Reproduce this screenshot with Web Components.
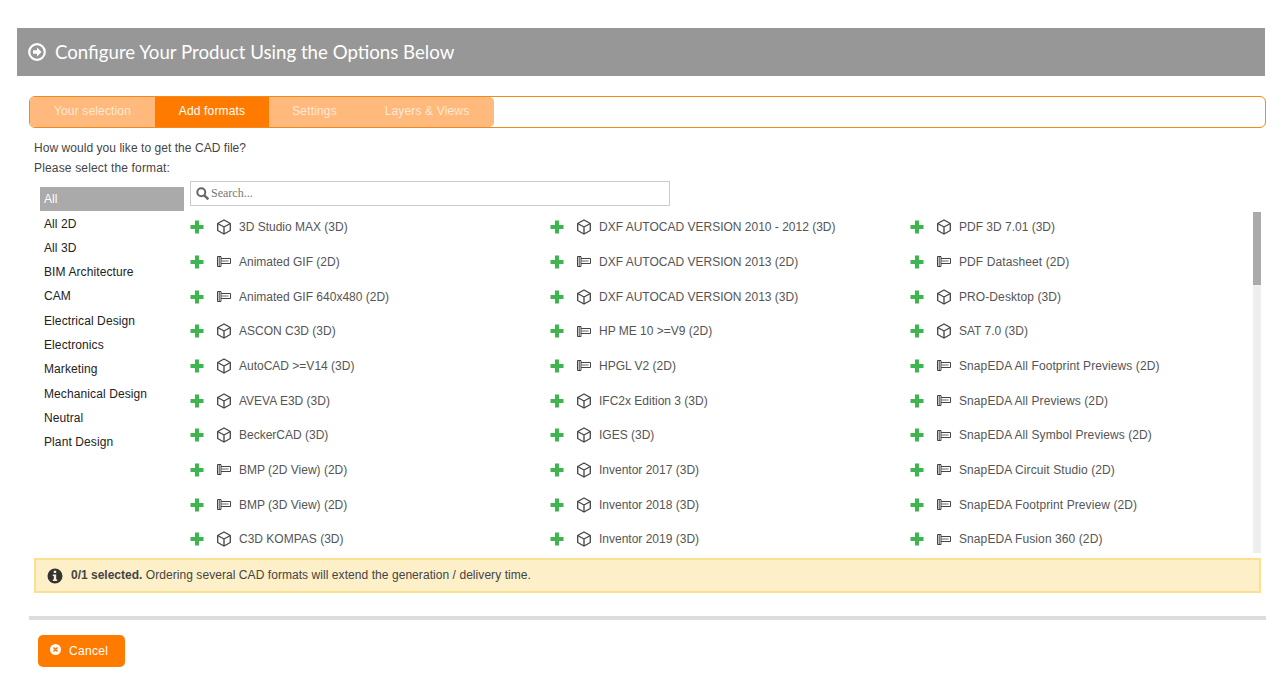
<!DOCTYPE html>
<html>
<head>
<meta charset="utf-8">
<title>Configure</title>
<style>
  html, body { margin: 0; background: #fff; }
  body { font-family: "Liberation Sans", Arial, sans-serif; font-size: 12px; }
</style>
</head>
<body>
<cfg-page></cfg-page>

<script>
const ICONS = {
  plus: `<svg width="14" height="14" viewBox="0 0 14 14"><path fill="#3fb54f" d="M5 .5h4V5h4.500v4H9v4.500H5V9H.5V5H5z"/></svg>`,
  cube: `<svg width="16" height="16" viewBox="0 0 16 16" fill="none" stroke="#444" stroke-width="1.300" stroke-linejoin="round"><path d="M8 1l6.300 3.500v7L8 15l-6.300-3.500v-7z"/><path d="M1.700 4.500L8 8l6.300-3.500M8 8v7"/></svg>`,
  flat: `<svg width="14" height="11" viewBox="0 0 14 11" fill="none" stroke="#444" stroke-width="1"><path d="M.5.500h3.500v10H.500z"/><path d="M2.200 .5v10"/><path d="M4 2.500h9.500v5H4"/><path d="M4 5h7.500" stroke="#666"/></svg>`
}

class CfgHeader extends HTMLElement {
  constructor() {
    super()
    this.attachShadow({mode: 'open'}).innerHTML = `
    <style>
      :host { display: flex; align-items: center; gap: 9px; height: 48px; margin: 28px 20px 0 17px; padding-left: 11px; background: #979797; color: #fff; font: 18.670px Lato, sans-serif; }
      svg { display: block; }
      span { padding-bottom: 1px; }
    </style>
    <svg width="18" height="18" viewBox="0 0 18 18"><circle cx="9" cy="9" r="7.800" fill="none" stroke="#fff" stroke-width="2.200"/><path fill="#fff" d="M9 4.500L13.500 9 9 13.500V10.700H5V7.300H9z"/></svg>
    <span><slot></slot></span>`
  }
}

class CfgTabs extends HTMLElement {
  constructor() {
    super()
    this.attachShadow({mode: 'open'}).innerHTML = `
    <style>
      :host { display: block; height: 30px; margin: 20px 19px 0 29px; border: 1px solid #f08a1d; border-radius: 6px; }
      .row { display: inline-flex; height: 100%; background: #ffb97d; border-radius: 5px; overflow: hidden; }
    </style>
    <div class="row"><slot></slot></div>`
  }
}

class CfgTab extends HTMLElement {
  constructor() {
    super()
    this.attachShadow({mode: 'open'}).innerHTML = `
    <style>
      :host { display: flex; align-items: center; justify-content: center; box-sizing: border-box; padding-bottom: 2px; color: #ffe9d4; font-size: 12px; letter-spacing: .15px; }
      :host([active]) { background: #ff7b00; color: #fff; }
    </style>
    <slot></slot>`
  }
  connectedCallback() {
    this.style.width = this.getAttribute('w') + 'px'
  }
}

class SideItem extends HTMLElement {
  constructor() {
    super()
    this.attachShadow({mode: 'open'}).innerHTML = `
    <style>
      :host { display: flex; align-items: center; height: 24px; margin-bottom: 0.300px; padding-left: 4px; color: #222; font-size: 12px; letter-spacing: .1px; }
      :host([active]) { margin-bottom: .5px; background: #aaa; color: #fff; }
    </style>
    <slot></slot>`
  }
}

class FormatItem extends HTMLElement {
  constructor() {
    super()
    this.attachShadow({mode: 'open'}).innerHTML = `
    <style>
      :host { display: flex; align-items: center; height: 34.670px; color: #555; font-size: 12px; white-space: nowrap; }
      :host([wide]) { letter-spacing: .09px; }
      .plus { display: flex; width: 26px; margin-left: -.5px; margin-right: .5px; }
      .type { display: flex; justify-content: center; width: 16px; margin-right: 7px; }
    </style>
    <span class="plus">${ICONS.plus}</span>
    <span class="type">${this.getAttribute('kind') === '3d' ? ICONS.cube : ICONS.flat}</span>
    <span><slot></slot></span>`
  }
}

class SearchBox extends HTMLElement {
  constructor() {
    super()
    this.attachShadow({mode: 'open'}).innerHTML = `
    <style>
      :host { display: flex; align-items: center; gap: 2px; width: 478px; height: 23px; border: 1px solid #ccc; }
      svg { margin-left: 5px; }
      input { flex: 1; border: 0; outline: 0; padding: 0; font: 12px "Liberation Serif", serif; }
      input::placeholder { color: #777; }
    </style>
    <svg width="13" height="13" viewBox="0 0 13 13" fill="none" stroke="#666" stroke-width="2"><circle cx="5.300" cy="5.300" r="4"/><path d="M8.300 8.300l4 4" stroke-width="2.400"/></svg>
    <input placeholder="Search...">`
  }
}

class CfgAlert extends HTMLElement {
  constructor() {
    super()
    this.attachShadow({mode: 'open'}).innerHTML = `
    <style>
      :host { display: flex; align-items: center; gap: 8px; height: 31px; margin: 5px 24px 0 34px; padding-left: 11px; border: 2px solid #fbe08f; background: #fdf0c8; color: #444; font-size: 12px; }
      svg { display: block; }
      span { padding-bottom: 2px; letter-spacing: .06px; }
      ::slotted(b) { letter-spacing: 0; }
    </style>
    <svg width="16" height="16" viewBox="0 0 16 16"><circle cx="8" cy="8" r="7.500" fill="#333"/><path fill="#fdf0c8" d="M6.800 2.800h2.400v2.200H6.800zM5.800 6.500h3.400v5h1v1.500H5.800v-1.500h1v-3.500h-1z"/></svg>
    <span><slot></slot></span>`
  }
}

class CfgButton extends HTMLElement {
  constructor() {
    super()
    this.attachShadow({mode: 'open'}).innerHTML = `
    <style>
      :host { display: inline-flex; align-items: center; box-sizing: border-box; width: 87px; height: 32px; gap: 8px; padding-left: 12px; background: #ff7b00; border-radius: 5px; color: #fff; font-size: 12px; letter-spacing: .3px; }
      svg { display: block; margin-top: -3px; }
    </style>
    <svg width="11" height="11" viewBox="0 0 11 11"><circle cx="5.500" cy="5.500" r="5.500" fill="#fff"/><path d="M3.500 3.500l4 4M7.500 3.500l-4 4" stroke="#ff7b00" stroke-width="1.600"/></svg>
    <slot></slot>`
  }
}

class FormatPicker extends HTMLElement {
  constructor() {
    super()
    const cats = ['All 2D', 'All 3D', 'BIM Architecture', 'CAM', 'Electrical Design', 'Electronics', 'Marketing', 'Mechanical Design', 'Neutral', 'Plant Design']
    const formats = [
      ['3d', '3D Studio MAX (3D)'], ['3d', 'DXF AUTOCAD VERSION 2010 - 2012 (3D)'], ['3d', 'PDF 3D 7.01 (3D)'],
      ['2d', 'Animated GIF (2D)'], ['2d', 'DXF AUTOCAD VERSION 2013 (2D)'], ['2d', 'PDF Datasheet (2D)', 1],
      ['2d', 'Animated GIF 640x480 (2D)'], ['3d', 'DXF AUTOCAD VERSION 2013 (3D)'], ['3d', 'PRO-Desktop (3D)', 1],
      ['3d', 'ASCON C3D (3D)'], ['2d', 'HP ME 10 &gt;=V9 (2D)'], ['3d', 'SAT 7.0 (3D)'],
      ['3d', 'AutoCAD &gt;=V14 (3D)'], ['2d', 'HPGL V2 (2D)'], ['2d', 'SnapEDA All Footprint Previews (2D)', 1],
      ['3d', 'AVEVA E3D (3D)'], ['3d', 'IFC2x Edition 3 (3D)'], ['2d', 'SnapEDA All Previews (2D)', 1],
      ['3d', 'BeckerCAD (3D)'], ['3d', 'IGES (3D)'], ['2d', 'SnapEDA All Symbol Previews (2D)', 1],
      ['2d', 'BMP (2D View) (2D)'], ['3d', 'Inventor 2017 (3D)'], ['2d', 'SnapEDA Circuit Studio (2D)', 1],
      ['2d', 'BMP (3D View) (2D)'], ['3d', 'Inventor 2018 (3D)'], ['2d', 'SnapEDA Footprint Preview (2D)', 1],
      ['3d', 'C3D KOMPAS (3D)'], ['3d', 'Inventor 2019 (3D)'], ['2d', 'SnapEDA Fusion 360 (2D)', 1],
    ]
    this.attachShadow({mode: 'open'}).innerHTML = `
    <style>
      :host { display: grid; grid-template-columns: 144px 1fr; column-gap: 6px; height: 372px; margin: 3px 24px 0 40px; }
      .side { padding-top: 6px; }
      .main { display: flex; flex-direction: column; min-width: 0; }
      .wrap { display: flex; margin-top: 6px; height: 341px; }
      .list { flex: 1; display: grid; grid-template-columns: repeat(3, 360px); align-content: start; overflow: hidden; margin-top: -2px; height: 343px; }
      .track { width: 8px; background: #eee; }
      .thumb { height: 73px; background: #aaa; }
    </style>
    <div class="side">
      <side-item active>All</side-item>
      ${cats.map(c => `<side-item>${c}</side-item>`).join('')}
    </div>
    <div class="main">
      <search-box></search-box>
      <div class="wrap">
        <div class="list">${formats.map(f => `<format-item kind="${f[0]}"${f[2] ? ' wide' : ''}>${f[1]}</format-item>`).join('')}</div>
        <div class="track"><div class="thumb"></div></div>
      </div>
    </div>`
  }
}

class CfgPage extends HTMLElement {
  constructor() {
    super()
    this.attachShadow({mode: 'open'}).innerHTML = `
    <style>
      :host { display: block; }
      .intro { margin: 10px 0 0 34px; color: #444; font-size: 12px; line-height: 20px; }
      .intro span { display: block; letter-spacing: .05px; }
      .intro span + span { letter-spacing: .16px; }
      hr { height: 4px; margin: 23px 19px 0 29px; border: 0; background: #ddd; }
      .foot { margin: 15px 0 0 38px; }
    </style>
    <cfg-header>Configure Your Product Using the Options Below</cfg-header>
    <cfg-tabs>
      <cfg-tab w="125">Your selection</cfg-tab>
      <cfg-tab w="114" active>Add formats</cfg-tab>
      <cfg-tab w="91">Settings</cfg-tab>
      <cfg-tab w="134">Layers &amp; Views</cfg-tab>
    </cfg-tabs>
    <div class="intro"><span>How would you like to get the CAD file?</span><span>Please select the format:</span></div>
    <format-picker></format-picker>
    <cfg-alert><b>0/1 selected.</b> Ordering several CAD formats will extend the generation / delivery time.</cfg-alert>
    <hr>
    <div class="foot"><cfg-button>Cancel</cfg-button></div>`
  }
}

customElements.define('cfg-header', CfgHeader)
customElements.define('cfg-tabs', CfgTabs)
customElements.define('cfg-tab', CfgTab)
customElements.define('side-item', SideItem)
customElements.define('format-item', FormatItem)
customElements.define('search-box', SearchBox)
customElements.define('cfg-alert', CfgAlert)
customElements.define('cfg-button', CfgButton)
customElements.define('format-picker', FormatPicker)
customElements.define('cfg-page', CfgPage)
</script>
</body>
</html>
